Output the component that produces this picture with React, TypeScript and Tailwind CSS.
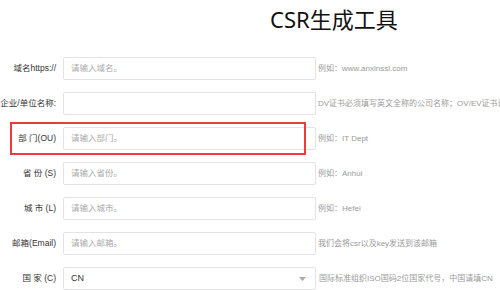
import React from "react";

const rows = [
  { label: "域名https://", placeholder: "请输入域名。", hint: "例如：www.anxinssl.com" },
  { label: "企业/单位名称:", placeholder: "", hint: "DV证书必须填写英文全称的公司名称；OV/EV证书请填写营业执照上的公司名称" },
  { label: "部 门(OU)", placeholder: "请输入部门。", hint: "例如：IT Dept" },
  { label: "省 份 (S)", placeholder: "请输入省份。", hint: "例如：Anhui" },
  { label: "城 市 (L)", placeholder: "请输入城市。", hint: "例如：Hefei" },
  { label: "邮箱(Email)", placeholder: "请输入邮箱。", hint: "我们会将csr以及key发送到该邮箱" },
];

const font = { fontFamily: '"Liberation Sans", "Noto Sans CJK SC", sans-serif' };

export default function App() {
  return (
    <div
      className="relative h-[290px] w-[500px] overflow-hidden bg-white"
      style={font}
    >
      <div className="flex h-[44px] items-start pt-[3px] pl-[270px]">
        <h1
          className="text-[22px] leading-[32px] font-normal text-[#111]"
          style={{ fontFamily: '"Noto Sans", "Noto Sans CJK SC", sans-serif' }}
        >
          CSR生成工具
        </h1>
      </div>

      <div className="mt-[13px] flex flex-col gap-[12px]">
        {rows.map((r) => (
          <div key={r.label} className="flex h-[23px] items-center whitespace-nowrap">
            <div className="flex w-[56px] shrink-0 justify-end text-[8.5px] text-[#333]">
              <label>{r.label}</label>
            </div>
            <div className="ml-[7px] flex h-[23px] w-[253px] shrink-0 items-center rounded-[2px] border border-[#e3e3e3] px-[7px] text-[8.5px] text-[#aaa]">
              {r.placeholder}
            </div>
            <span className="ml-[2px] text-[8px] text-[#9a9a9a]">{r.hint}</span>
          </div>
        ))}

        <div className="flex h-[23px] items-center whitespace-nowrap">
          <div className="flex w-[56px] shrink-0 justify-end text-[8.5px] text-[#333]">
            <label>国 家 (C)</label>
          </div>
          <div className="ml-[7px] flex h-[23px] w-[253px] shrink-0 items-center justify-between rounded-[2px] border border-[#e3e3e3] pr-[9px] pl-[7px] text-[9px] text-[#333]">
            <span>CN</span>
            <svg width="7" height="4" viewBox="0 0 7 4">
              <path d="M0 0h7L3.5 4z" fill="#aaa" />
            </svg>
          </div>
          <span className="ml-[3px] text-[8px] text-[#9a9a9a]">国际标准组织ISO国码2位国家代号，中国请填CN</span>
        </div>
      </div>

      <div className="absolute top-[122px] left-[10px] h-[33px] w-[296px] border-2 border-[#ef3b3b]" />
    </div>
  );
}
